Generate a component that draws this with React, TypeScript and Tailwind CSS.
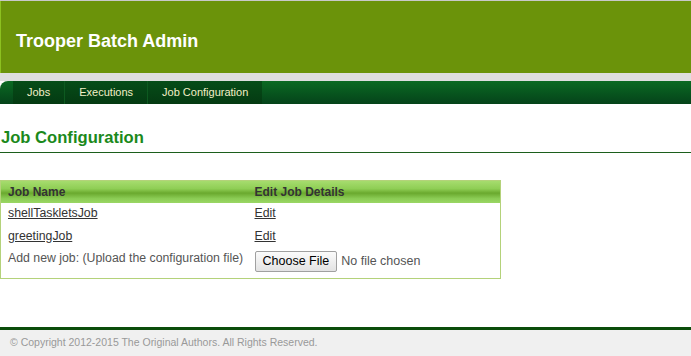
export default function App() {
  const navItems = ["Jobs", "Executions", "Job Configuration"];

  return (
    <div className="min-h-[356px] bg-white font-['Liberation_Sans',Arial,sans-serif] flex flex-col">
      {/* header */}
      <div className="border-t border-[#c8c8c8]">
        <div className="h-[72px] bg-[#6b930a] border-l border-[#8cc020] flex items-center pl-[15px]">
          <h1 className="text-[18px] font-bold text-white mt-[8px]">
            Trooper Batch Admin
          </h1>
        </div>
      </div>
      <div className="h-[8px] bg-[#dedede]" />

      {/* nav */}
      <div className="h-[23px] flex rounded-tl-[8px] bg-gradient-to-b from-[#0b6a22] to-[#05431a]">
        <div className="w-[13px]" />
        {navItems.map((item, i) => (
          <div
            key={item}
            className={
              "h-full flex items-center px-[14px] text-[11px] text-[#f3efc7] bg-gradient-to-b from-[#064d18] to-[#043a12] " +
              (i < navItems.length - 1 ? "border-r border-[#0d5a20]" : "")
            }
          >
            {item}
          </div>
        ))}
      </div>

      {/* content */}
      <div className="mt-[24px]">
        <h2 className="text-[16.6px] font-bold text-[#1b891b] leading-[20px] pl-[1px] pb-[4px] border-b border-[#1c5e1c]">
          Job Configuration
        </h2>

        <table className="mt-[27px] w-[501px] border border-[#b4d27a] border-collapse text-[12.3px] text-[#333]">
          <thead>
            <tr className="h-[22px] bg-[linear-gradient(to_bottom,#a6dc6e_0%,#8fce55_35%,#6aa92e_55%,#8bcc55_80%,#9ad764_100%)]">
              <th className="text-left pl-[7px] font-bold text-[12px] w-[254px]">Job Name</th>
              <th className="text-left font-bold text-[12px]">Edit Job Details</th>
            </tr>
          </thead>
          <tbody>
            <tr className="h-[22px]">
              <td className="pl-[7px]">
                <a href="#" className="underline text-[#333]">shellTaskletsJob</a>
              </td>
              <td>
                <a href="#" className="underline text-[#333]">Edit</a>
              </td>
            </tr>
            <tr className="h-[23px]">
              <td className="pl-[7px]">
                <a href="#" className="underline text-[#333]">greetingJob</a>
              </td>
              <td>
                <a href="#" className="underline text-[#333]">Edit</a>
              </td>
            </tr>
            <tr className="h-[31px] align-top">
              <td className="pl-[7px] pt-[1px] text-[#555]">
                Add new job: (Upload the configuration file)
              </td>
              <td className="pt-[3px]">
                <div className="flex items-center gap-[4px]">
                  <span className="inline-flex items-center h-[21px] px-[7px] text-[12.5px] text-black border border-[#a0a0a0] rounded-[2px] bg-gradient-to-b from-[#fbfbfb] to-[#e3e3e3]">
                    Choose File
                  </span>
                  <span className="text-[12.5px] text-[#555]">No file chosen</span>
                </div>
              </td>
            </tr>
          </tbody>
        </table>
      </div>

      {/* footer */}
      <div className="mt-auto border-t-[3px] border-[#0b4d0b] bg-[#f0f0f0] h-[29px] flex items-center pl-[10px]">
        <p className="text-[10.5px] text-[#999]">
          © Copyright 2012-2015 The Original Authors. All Rights Reserved.
        </p>
      </div>
    </div>
  );
}
